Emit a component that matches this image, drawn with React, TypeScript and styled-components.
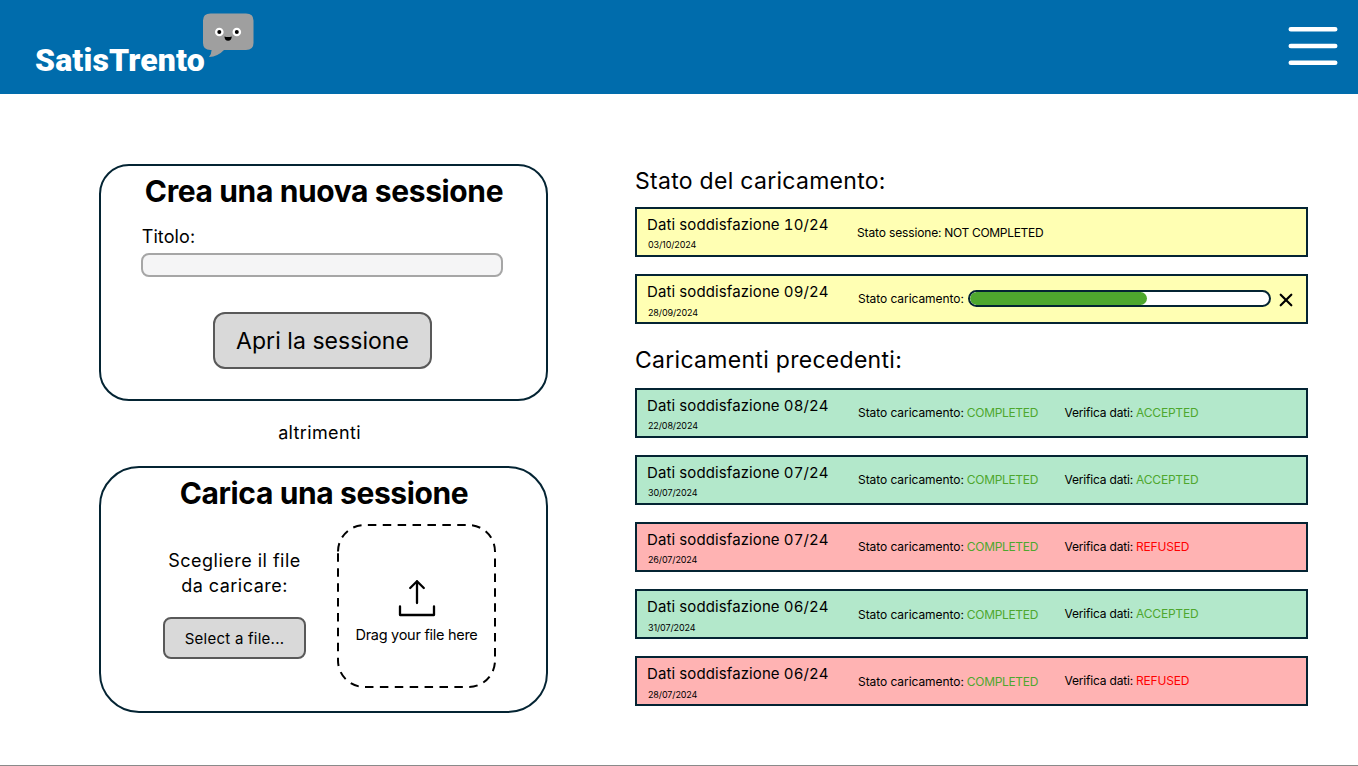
import React from 'react';
import styled, { createGlobalStyle } from 'styled-components';

const ink = '#042433';

const GlobalStyle = createGlobalStyle`
  *, *::before, *::after { box-sizing: border-box; }
  body { margin: 0; background: #fff; color: #000; font-family: Inter, "Liberation Sans", sans-serif; }
  h1, h2, p { margin: 0; font-weight: 400; }
  button, input { font: inherit; color: inherit; }
`;

const Page = styled.div`
  display: flex;
  flex-direction: column;
  height: 766px;
  border-bottom: 1px solid #8a8a8a;
`;

const Header = styled.header`
  display: flex;
  align-items: flex-start;
  justify-content: space-between;
  height: 94px;
  padding: 0 20px 0 35px;
  background: #006cac;
`;

const Brand = styled.div`
  display: flex;
  align-items: flex-start;
`;

const BrandName = styled.h1`
  width: 167px;
  padding-top: 41px;
  font: 900 32px/38px Roboto, Arial, sans-serif;
  letter-spacing: 0.15px;
  color: #fff;
  white-space: nowrap;
`;

const Mascot = styled.svg`
  margin-top: 12px;
`;

const MenuButton = styled.button`
  display: flex;
  margin-top: 26px;
  padding: 0;
  border: 0;
  background: none;
`;

const Main = styled.main`
  display: flex;
  gap: 87px;
  padding: 70px 0 0 99px;
`;

const Sessions = styled.section`
  display: flex;
  flex-direction: column;
  width: 449px;
`;

const Card = styled.div<{ $height: number; $radius: number }>`
  display: flex;
  flex-direction: column;
  align-items: center;
  height: ${p => p.$height}px;
  padding-top: 7px;
  border: 2px solid ${ink};
  border-radius: ${p => p.$radius}px;
`;

const CardTitle = styled.h2`
  font-size: 30px;
  font-weight: 700;
  line-height: 36px;
  letter-spacing: -0.38px;
  padding-left: 1px;
  white-space: nowrap;
`;

const Field = styled.label`
  display: flex;
  flex-direction: column;
  width: 362px;
  margin: 16px 3px 0 0;
  font-size: 18px;
  line-height: 24px;
  letter-spacing: 0.1px;
  text-indent: 0.7px;
`;

const TextInput = styled.input`
  width: 100%;
  height: 24px;
  margin-top: 4px;
  border: 2px solid #a6a6a6;
  border-radius: 8px;
  background: #f5f5f6;
`;

const Button = styled.button`
  display: flex;
  align-items: center;
  justify-content: center;
  padding: 0;
  border: 2px solid #595959;
  background: #d9d9d9;
  white-space: nowrap;
`;

const OpenButton = styled(Button)`
  width: 219px;
  height: 57px;
  margin: 35px 2px 0 0;
  border-radius: 12px;
  font-size: 23px;
  letter-spacing: 0.05px;
`;

const SelectButton = styled(Button)`
  width: 143px;
  height: 42px;
  border-radius: 8px;
  font-size: 15px;
  letter-spacing: 0.25px;
`;

const Otherwise = styled.p`
  height: 65px;
  padding-right: 8px;
  font-size: 18px;
  line-height: 64px;
  letter-spacing: 0.35px;
  text-align: center;
`;

const UploadArea = styled.div`
  display: flex;
  align-self: stretch;
  gap: 31px;
  padding: 13px 0 0 62px;
`;

const Chooser = styled.div`
  display: flex;
  flex-direction: column;
  align-items: center;
  gap: 19px;
  width: 143px;
  padding-top: 24px;
`;

const ChooserText = styled.p`
  font-size: 18px;
  line-height: 25px;
  letter-spacing: 0.48px;
  text-align: center;
  white-space: nowrap;
`;

const DropZone = styled.div`
  position: relative;
  display: flex;
  flex-direction: column;
  align-items: center;
  gap: 8px;
  width: 159px;
  height: 164px;
  padding-top: 55px;
`;

const DropOutline = styled.svg`
  position: absolute;
  inset: 0;
`;

const DropText = styled.p`
  font-size: 14.5px;
  line-height: 20px;
  letter-spacing: -0.28px;
  white-space: nowrap;
`;

const Uploads = styled.section`
  width: 673px;
`;

const SectionTitle = styled.h2<{ $before?: number; $after: number }>`
  padding: ${p => p.$before ?? 0}px 0 ${p => p.$after}px;
  font-size: 23px;
  line-height: 34px;
  letter-spacing: 0.29px;
`;

const List = styled.div`
  display: flex;
  flex-direction: column;
  gap: 17px;
`;

const tones = { pending: '#ffffb3', accepted: '#b3e8cb', refused: '#ffb3b3' };
type Tone = keyof typeof tones;

const Row = styled.article<{ $tone: Tone }>`
  display: flex;
  align-items: center;
  height: 50px;
  padding-left: 10px;
  border: 2px solid ${ink};
  background: ${p => tones[p.$tone]};
  font-size: 12px;
  white-space: nowrap;
`;

const Info = styled.div`
  display: flex;
  flex-direction: column;
  align-self: flex-start;
  width: 211px;
  padding-top: 6px;
`;

const Name = styled.span`
  font-size: 15px;
  line-height: 20px;
  letter-spacing: 0.1px;
  font-variant-numeric: tabular-nums;
`;

const DateText = styled.span<{ $low?: boolean }>`
  padding: ${p => (p.$low ? 4 : 3)}px 0 0 1px;
  font-size: 9px;
  line-height: 13px;
  letter-spacing: -0.12px;
`;

const Status = styled.div<{ $low?: boolean }>`
  display: flex;
  gap: 3px;
  width: 206px;
  line-height: 16px;
  padding-top: ${p => (p.$low ? 2 : 0)}px;
  letter-spacing: -0.06px;
`;

const SessionStatus = styled(Status)`
  margin-left: -1px;
  letter-spacing: -0.14px;
`;

const Check = styled(Status)`
  width: auto;
  padding-left: 0.5px;
  letter-spacing: -0.18px;
`;

const Value = styled.span<{ $color?: string }>`
  color: ${p => p.$color ?? '#000'};
  letter-spacing: -0.32px;
`;

const Verdict = styled(Value)`
  letter-spacing: -0.2px;
`;

const Track = styled.div`
  width: 303px;
  height: 17px;
  margin: 0 7.5px 2px -96px;
  border: 2px solid ${ink};
  border-radius: 9px;
  background: #fff;
  overflow: hidden;
`;

const Fill = styled.div`
  height: 100%;
  border-radius: 7px;
  background: #4ea72e;
`;

const CancelButton = styled.button`
  display: flex;
  padding: 1px 0 0;
  border: 0;
  background: none;
`;

const green = '#4ea72e';
const red = '#ff0000';

const history = [
  { name: '08/24', date: '22/08/2024', ok: true, low: false },
  { name: '07/24', date: '30/07/2024', ok: true, low: false },
  { name: '07/24', date: '26/07/2024', ok: false, low: false },
  { name: '06/24', date: '31/07/2024', ok: true, low: true },
  { name: '06/24', date: '28/07/2024', ok: false, low: true },
];

function SessionInfo({ name, date, low }: { name: string; date: string; low?: boolean }) {
  return (
    <Info>
      <Name>Dati soddisfazione {name}</Name>
      <DateText $low={low}>{date}</DateText>
    </Info>
  );
}

export default function App() {
  const progress = 177 / 299;
  return (
    <Page>
      <GlobalStyle />
      <Header>
        <Brand>
          <BrandName>SatisTrento</BrandName>
          <Mascot width="53" height="47" viewBox="0 0 53 47">
            <path d="M8.500 1.500H44Q51.500 1.500 51.500 8.500V31Q51.500 38 44 38H22Q16 44.500 7 45Q9.500 42 9.600 38H8.500Q1 38 1 31V8.500Q1 1.500 8.500 1.500Z" fill="#9f9f9f" />
            <circle cx="17.300" cy="20" r="4.300" fill="#fff" />
            <circle cx="34.800" cy="20" r="4.300" fill="#fff" />
            <circle cx="17.300" cy="20" r="2" fill="#000" />
            <circle cx="34.800" cy="20" r="2" fill="#000" />
            <path d="M22.400 24.500q3.700 1 7.400 0q-.3 4.200-3.700 4.200t-3.700-4.200z" fill="#000" />
          </Mascot>
        </Brand>
        <MenuButton aria-label="Menu">
          <svg width="50" height="40" viewBox="0 0 50 40" stroke="#fff" strokeWidth="4.600" strokeLinecap="round">
            <path d="M2.800 3.300h44.400M2.800 20h44.400M2.800 36.700h44.400" />
          </svg>
        </MenuButton>
      </Header>
      <Main>
        <Sessions>
          <Card $height={237} $radius={30}>
            <CardTitle>Crea una nuova sessione</CardTitle>
            <Field>
              Titolo:
              <TextInput />
            </Field>
            <OpenButton>Apri la sessione</OpenButton>
          </Card>
          <Otherwise>altrimenti</Otherwise>
          <Card $height={247} $radius={40}>
            <CardTitle>Carica una sessione</CardTitle>
            <UploadArea>
              <Chooser>
                <ChooserText>Scegliere il file<br />da caricare:</ChooserText>
                <SelectButton>Select a file...</SelectButton>
              </Chooser>
              <DropZone>
                <DropOutline width="159" height="164" viewBox="0 0 159 164" fill="none" stroke="#000" strokeWidth="2">
                  <path d="M1 27.500A26.500 26.500 0 0 1 27.500 1H131.500A26.500 26.500 0 0 1 158 27.500V136.500A26.500 26.500 0 0 1 131.500 163H27.500A26.500 26.500 0 0 1 1 136.500Z" strokeDasharray="8.500 6.400" />
                </DropOutline>
                <svg width="38" height="38" viewBox="0 0 38 38" fill="none" stroke="#000" strokeWidth="2.300" strokeLinecap="round" strokeLinejoin="round">
                  <path d="M19 24V2.200M12.200 9l6.800-6.800 6.800 6.800M2 27.500V36h34V27.500" />
                </svg>
                <DropText>Drag your file here</DropText>
              </DropZone>
            </UploadArea>
          </Card>
        </Sessions>
        <Uploads>
          <SectionTitle $after={9}>Stato del caricamento:</SectionTitle>
          <List>
            <Row $tone="pending">
              <SessionInfo name="10/24" date="03/10/2024" />
              <SessionStatus $low><span>Stato sessione:</span><Value>NOT COMPLETED</Value></SessionStatus>
            </Row>
            <Row $tone="pending">
              <SessionInfo name="09/24" date="28/09/2024" low />
              <Status>Stato caricamento:</Status>
              <Track><Fill style={{ width: `${progress * 100}%` }} /></Track>
              <CancelButton aria-label="Annulla">
                <svg width="14" height="14" viewBox="0 0 14 14" stroke="#000" strokeWidth="2.200" strokeLinecap="round">
                  <path d="M1.700 1.700l10.600 10.600M12.300 1.700L1.700 12.300" />
                </svg>
              </CancelButton>
            </Row>
          </List>
          <SectionTitle $before={19} $after={11}>Caricamenti precedenti:</SectionTitle>
          <List>
            {history.map(h => (
              <Row key={h.date} $tone={h.ok ? 'accepted' : 'refused'}>
                <SessionInfo name={h.name} date={h.date} low={h.low} />
                <Status $low={h.low}>
                  <span>Stato caricamento:</span><Value $color={green}>COMPLETED</Value>
                </Status>
                <Check>
                  <span>Verifica dati:</span>
                  <Verdict $color={h.ok ? green : red}>{h.ok ? 'ACCEPTED' : 'REFUSED'}</Verdict>
                </Check>
              </Row>
            ))}
          </List>
        </Uploads>
      </Main>
    </Page>
  );
}
